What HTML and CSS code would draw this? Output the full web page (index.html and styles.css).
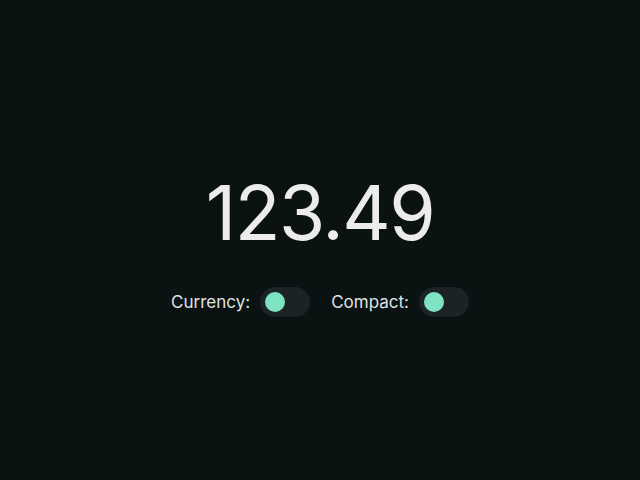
FILE: index.html
```html
<!DOCTYPE html>
<html>
<head>
<meta charset="utf-8">
<link rel="stylesheet" href="styles.css">
</head>
<body>
<main class="stage">
  <div class="value">123.49</div>
  <div class="controls">
    <label class="control">
      <span class="label">Currency:</span>
      <span class="toggle"><span class="knob"></span></span>
    </label>
    <label class="control">
      <span class="label">Compact:</span>
      <span class="toggle"><span class="knob"></span></span>
    </label>
  </div>
</main>
</body>
</html>
```
FILE: styles.css
```css
html, body {
  margin: 0;
  padding: 0;
  background: #0b1212;
  width: 100%;
  height: 100%;
}
body {
  font-family: Inter, "Noto Sans", sans-serif;
  color: #ececec;
}
.stage {
  height: 480px;
  box-sizing: border-box;
  padding-top: 12px;
  display: flex;
  flex-direction: column;
  align-items: center;
  justify-content: center;
  gap: 37px;
}
.value {
  font-size: 75px;
  font-weight: 400;
  line-height: 1;
  letter-spacing: -1.5px;
  color: #ececec;
}
.controls {
  display: flex;
  align-items: center;
  gap: 21px;
}
.control {
  display: flex;
  align-items: center;
  gap: 10px;
}
.label {
  font-size: 17px;
  color: #dfe3e3;
}
.toggle {
  width: 50px;
  height: 30px;
  border-radius: 15px;
  background: #1c2327;
  display: flex;
  align-items: center;
  padding: 0 5px;
  box-sizing: border-box;
}
.knob {
  width: 20px;
  height: 20px;
  border-radius: 50%;
  background: #7de3c0;
}
```
